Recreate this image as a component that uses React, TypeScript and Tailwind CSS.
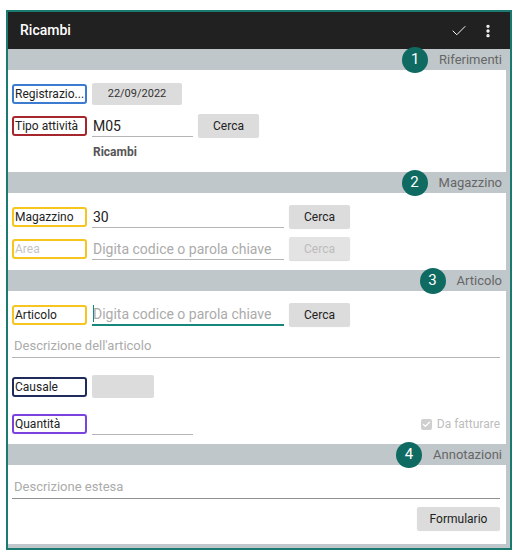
import { Check, EllipsisVertical } from "lucide-react";

type SectionProps = {
  n: number;
  title: string;
  children: React.ReactNode;
  bodyClass: string;
};

// grey header strip with the numbered badge on the right
function Section({ n, title, children, bodyClass }: SectionProps) {
  return (
    <div>
      <div className="h-[21px] flex items-center justify-end pr-[8px] gap-[11px]">
        <div className="w-[26px] h-[26px] rounded-full bg-[#0f6a62] text-white text-[15px] flex items-center justify-center relative z-10">
          {n}
        </div>
        <span className="text-[13px] text-[#666]">{title}</span>
      </div>
      <div className={`bg-white mr-[4px] pl-[4px] ${bodyClass}`}>{children}</div>
    </div>
  );
}

function Label({ text, color, muted }: { text: string; color: string; muted?: boolean }) {
  return (
    <div
      className={`w-[75px] h-[20px] shrink-0 rounded-[3px] border-2 flex items-center pl-[1px] text-[12px] leading-none whitespace-nowrap overflow-hidden ${
        muted ? "text-[#c4c4c4]" : "text-[#222]"
      }`}
      style={{ borderColor: color }}
    >
      {text}
    </div>
  );
}

function Field({ value, placeholder, width, focused }: { value?: string; placeholder?: string; width: string; focused?: boolean }) {
  return (
    <div
      className={`${width} h-[22px] flex items-end pl-[1px] text-[14px] leading-[20px] whitespace-nowrap overflow-hidden ${
        focused ? "border-b-2 border-[#17877b]" : "border-b border-[#b5b5b5]"
      } ${value ? "text-[#222]" : "text-[#ababab]"}`}
    >
      {focused && <span className="w-px h-[17px] bg-[#17877b] mb-[2px] -mr-px" />}
      {value || placeholder}
    </div>
  );
}

function Btn({ text, width, disabled }: { text: string; width: string; disabled?: boolean }) {
  return (
    <div
      className={`${width} h-[23px] shrink-0 rounded-[2px] bg-[#dcdcdc] shadow-[0_1px_1px_rgba(0,0,0,0.15)] flex items-center justify-center text-[12px] ${
        disabled ? "text-[#bcbcbc] bg-[#e3e3e3]" : "text-[#222]"
      }`}
    >
      {text}
    </div>
  );
}

export default function App() {
  return (
    <div className="w-[517px] h-[558px] bg-white pt-[10px] pl-[6px]" style={{ fontFamily: "Roboto, 'Noto Sans', sans-serif" }}>
      <div className="w-[506px] h-[540px] border-2 border-[#1b7a70] bg-[#c0c7cb] flex flex-col">
        {/* title bar */}
        <div className="h-[37px] bg-[#212121] flex items-center pl-[12px] pr-[14px] shrink-0">
          <span className="text-white text-[14px] font-medium">Ricambi</span>
          <div className="ml-auto flex items-center gap-[12px] text-white">
            <Check className="w-[18px] h-[18px]" strokeWidth={1.3} />
            <EllipsisVertical className="w-[16px] h-[16px]" strokeWidth={3} />
          </div>
        </div>

        <Section n={1} title="Riferimenti" bodyClass="h-[102px] pt-[13px]">
          <div className="flex items-center gap-[5px]">
            <Label text="Registrazio..." color="#3b7bd0" />
            <div className="w-[90px] h-[22px] rounded-[2px] bg-[#dcdcdc] flex items-center justify-center text-[11px] text-[#333]">
              22/09/2022
            </div>
          </div>
          <div className="flex items-center gap-[5px] mt-[9px]">
            <Label text="Tipo attività" color="#a6262e" />
            <Field value="M05" width="w-[101px]" />
            <Btn text="Cerca" width="w-[61px]" />
          </div>
          <div className="pl-[81px] mt-[6px] text-[12px] font-bold text-[#555]">Ricambi</div>
        </Section>

        <Section n={2} title="Magazzino" bodyClass="h-[77px] pt-[12px]">
          <div className="flex items-center gap-[5px]">
            <Label text="Magazzino" color="#f6c51f" />
            <Field value="30" width="w-[192px]" />
            <Btn text="Cerca" width="w-[61px]" />
          </div>
          <div className="flex items-center gap-[5px] mt-[9px]">
            <Label text="Area" color="#f6c51f" muted />
            <Field placeholder="Digita codice o parola chiave" width="w-[192px]" />
            <Btn text="Cerca" width="w-[61px]" disabled />
          </div>
        </Section>

        <Section n={3} title="Articolo" bodyClass="h-[153px] pt-[12px] pr-[6px]">
          <div className="flex items-center gap-[5px]">
            <Label text="Articolo" color="#f6c51f" />
            <Field placeholder="Digita codice o parola chiave" width="w-[192px]" focused />
            <Btn text="Cerca" width="w-[61px]" />
          </div>
          <div className="mt-[7px] h-[25px] border-b border-[#b5b5b5] flex items-end pb-[2px] pl-[2px] text-[13px] text-[#ababab]">
            Descrizione dell&apos;articolo
          </div>
          <div className="flex items-center gap-[5px] mt-[17px]">
            <Label text="Causale" color="#1e2b5b" />
            <div className="w-[62px] h-[23px] rounded-[2px] bg-[#dcdcdc]" />
          </div>
          <div className="flex items-center gap-[5px] mt-[15px]">
            <Label text="Quantità" color="#7a43e0" />
            <Field width="w-[101px]" />
            <div className="ml-auto flex items-center gap-[5px] text-[12px] text-[#bdbdbd]">
              <div className="w-[11px] h-[11px] rounded-[2px] bg-[#cfcfcf] flex items-center justify-center">
                <Check className="w-[9px] h-[9px] text-white" strokeWidth={3.5} />
              </div>
              Da fatturare
            </div>
          </div>
        </Section>

        <Section n={4} title="Annotazioni" bodyClass="h-[79px] pt-[12px] pr-[6px]">
          <div className="h-[22px] border-b border-[#8f8f8f] flex items-end pb-[2px] pl-[2px] text-[13px] text-[#ababab]">
            Descrizione estesa
          </div>
          <div className="flex justify-end mt-[8px]">
            <Btn text="Formulario" width="w-[83px]" />
          </div>
        </Section>
      </div>
    </div>
  );
}
